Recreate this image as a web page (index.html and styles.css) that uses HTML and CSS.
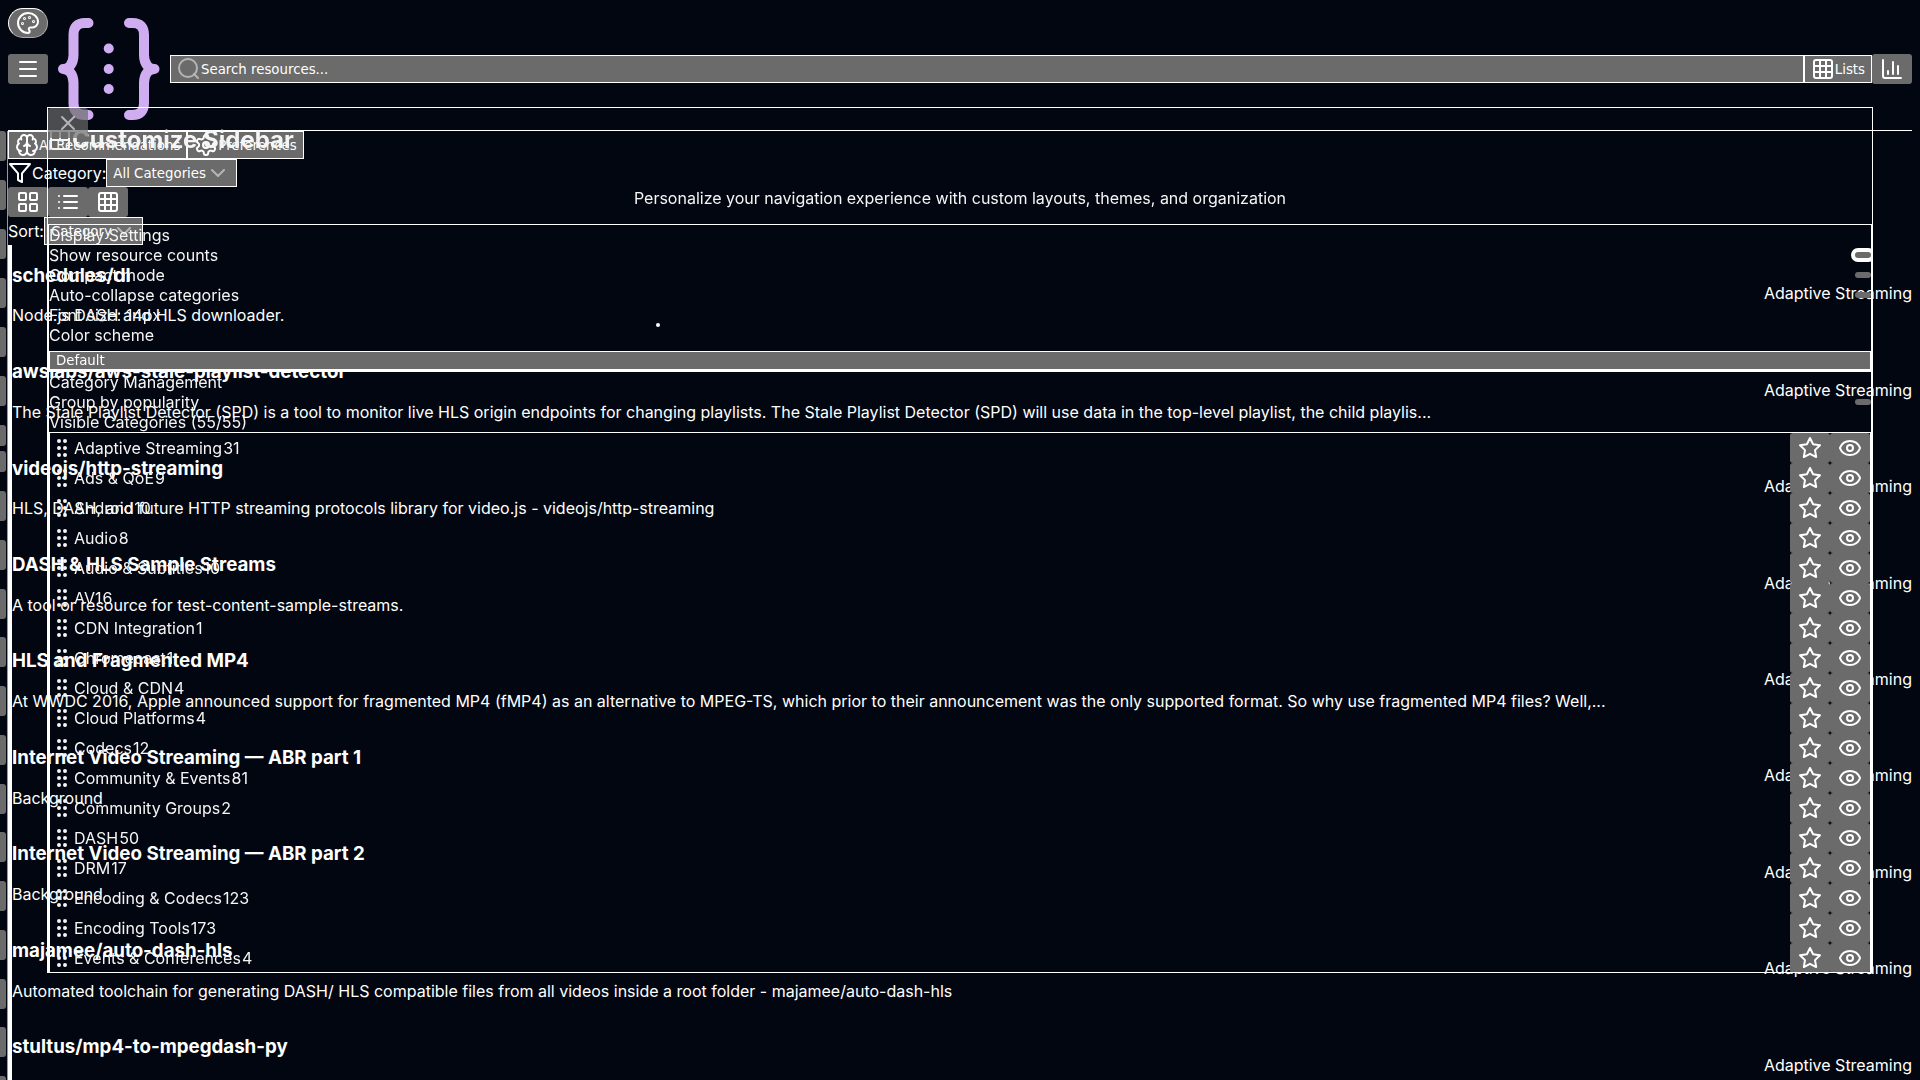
FILE: index.html
```html
<!DOCTYPE html>
<html lang="en">
<head>
<meta charset="utf-8">
<title>Awesome Video Resources</title>
<link rel="stylesheet" href="styles.css">
</head>
<body>
<svg class="sprite" aria-hidden="true">
<symbol id="palette" viewBox="0 0 24 24"><path d="M12 2C6.500 2 2 6.500 2 12s4.500 10 10 10c.926 0 1.648-.746 1.648-1.688 0-.437-.180-.835-.437-1.125-.290-.289-.438-.652-.438-1.125a1.640 1.640 0 0 1 1.668-1.668h1.996c3.051 0 5.555-2.503 5.555-5.554C21.965 6.012 17.461 2 12 2z"/><circle cx="13.500" cy="6.500" r=".5"/><circle cx="17.500" cy="10.500" r=".5"/><circle cx="8.500" cy="7.500" r=".5"/><circle cx="6.500" cy="12.500" r=".5"/></symbol>
<symbol id="menu" viewBox="0 0 24 24"><path d="M4 5h16M4 12h16M4 19h16"/></symbol>
<symbol id="search" viewBox="0 0 24 24"><circle cx="11" cy="11" r="9"/><path d="m21 21-4-4"/></symbol>
<symbol id="grid3" viewBox="0 0 24 24"><rect x="3" y="3" width="18" height="18" rx="2"/><path d="M3 9h18M3 15h18M9 3v18M15 3v18"/></symbol>
<symbol id="grid2" viewBox="0 0 24 24"><rect x="3" y="3" width="7" height="7" rx="1"/><rect x="14" y="3" width="7" height="7" rx="1"/><rect x="14" y="14" width="7" height="7" rx="1"/><rect x="3" y="14" width="7" height="7" rx="1"/></symbol>
<symbol id="list" viewBox="0 0 24 24"><path d="M8 6h13M8 12h13M8 18h13M3 6h.01M3 12h.01M3 18h.01"/></symbol>
<symbol id="chart" viewBox="0 0 24 24"><path d="M3 3v16a2 2 0 0 0 2 2h16M18 17V9M13 17V5M8 17v-3"/></symbol>
<symbol id="chevron" viewBox="0 0 24 24"><path d="m6 9 6 6 6-6"/></symbol>
<symbol id="close" viewBox="0 0 24 24"><path d="M18 6 6 18M6 6l12 12"/></symbol>
<symbol id="filter" viewBox="0 0 24 24"><path d="M22 3H2l8 9.460V19l4 2v-8.540L22 3z"/></symbol>
<symbol id="brain" viewBox="0 0 24 24"><path d="M12 5a3 3 0 1 0-5.997.125 4 4 0 0 0-2.526 5.770 4 4 0 0 0 .556 6.588A4 4 0 1 0 12 18ZM12 5a3 3 0 1 1 5.997.125 4 4 0 0 1 2.526 5.770 4 4 0 0 1-.556 6.588A4 4 0 1 1 12 18ZM15 13a4.500 4.500 0 0 1-3-4 4.500 4.500 0 0 1-3 4M17.599 6.500a3 3 0 0 0 .399-1.375M6.003 5.125A3 3 0 0 0 6.401 6.500M3.477 10.896a4 4 0 0 1 .585-.396M19.938 10.500a4 4 0 0 1 .585.396M6 18a4 4 0 0 1-1.967-.516M19.967 17.484A4 4 0 0 1 18 18"/></symbol>
<symbol id="gear" viewBox="0 0 24 24"><path d="M12.220 2h-.440a2 2 0 0 0-2 2v.180a2 2 0 0 1-1 1.730l-.430.250a2 2 0 0 1-2 0l-.150-.080a2 2 0 0 0-2.730.730l-.220.380a2 2 0 0 0 .730 2.730l.150.100a2 2 0 0 1 1 1.720v.510a2 2 0 0 1-1 1.740l-.150.090a2 2 0 0 0-.730 2.730l.220.380a2 2 0 0 0 2.730.730l.150-.080a2 2 0 0 1 2 0l.430.250a2 2 0 0 1 1 1.730V20a2 2 0 0 0 2 2h.440a2 2 0 0 0 2-2v-.180a2 2 0 0 1 1-1.730l.430-.250a2 2 0 0 1 2 0l.150.080a2 2 0 0 0 2.730-.730l.220-.390a2 2 0 0 0-.730-2.730l-.150-.080a2 2 0 0 1-1-1.740v-.500a2 2 0 0 1 1-1.740l.150-.090a2 2 0 0 0 .730-2.730l-.220-.380a2 2 0 0 0-2.730-.730l-.150.080a2 2 0 0 1-2 0l-.430-.250a2 2 0 0 1-1-1.730V4a2 2 0 0 0-2-2z"/><circle cx="12" cy="12" r="3"/></symbol>
<symbol id="panel" viewBox="0 0 24 24"><rect x="3" y="3" width="18" height="18" rx="2"/><path d="M3 12h18M12 3v9"/></symbol>
<symbol id="grip" viewBox="0 0 24 24"><circle cx="9" cy="12" r="1"/><circle cx="9" cy="5" r="1"/><circle cx="9" cy="19" r="1"/><circle cx="15" cy="12" r="1"/><circle cx="15" cy="5" r="1"/><circle cx="15" cy="19" r="1"/></symbol>
<symbol id="star" viewBox="0 0 24 24"><path d="m12 2 3.090 6.260L22 9.270l-5 4.870 1.180 6.880L12 17.770l-6.180 3.250L7 14.140 2 9.270l6.910-1.010L12 2z"/></symbol>
<symbol id="eye" viewBox="0 0 24 24"><path d="M2.062 12.348a1 1 0 0 1 0-.696 10.750 10.750 0 0 1 19.876 0 1 1 0 0 1 0 .696 10.750 10.750 0 0 1-19.876 0"/><circle cx="12" cy="12" r="3"/></symbol>
</svg>

<button class="icon-btn theme-btn" aria-label="Theme"><svg class="icon"><use href="#palette"/></svg></button>
<header class="topbar">
<button class="icon-btn" aria-label="Menu"><svg class="icon"><use href="#menu"/></svg></button>
<svg class="logo" viewBox="0 0 122 122" role="img" aria-label="Logo"><g class="braces"><path d="M40.500 15H37Q25.500 15 25.500 27V47Q25.500 54 22 58Q19 61 15 61Q19 61 22 64Q25.500 68 25.500 75V95Q25.500 107 37 107H40.500"/><path d="M81 15H84.500Q96 15 96 27V47Q96 54 99.500 58Q102.500 61 106.500 61Q102.500 61 99.500 64Q96 68 96 75V95Q96 107 84.500 107H81"/></g><g class="dots"><circle cx="60.700" cy="40.500" r="5"/><circle cx="60.700" cy="61" r="5"/><circle cx="60.700" cy="81" r="5"/></g></svg>
<button class="box-btn search"><svg class="icon faded"><use href="#search"/></svg>Search resources...</button>
<button class="box-btn"><svg class="icon"><use href="#grid3"/></svg>Lists</button>
<button class="icon-btn" aria-label="Statistics"><svg class="icon"><use href="#chart"/></svg></button>
</header>

<div class="page">
<aside class="rail" id="rail" aria-label="Categories"></aside>
<main class="content">
<div class="row"><button class="box-btn"><svg class="icon"><use href="#brain"/></svg>AI Recommendations</button><button class="box-btn"><svg class="icon"><use href="#gear"/></svg>Preferences</button></div>
<div class="row"><svg class="icon"><use href="#filter"/></svg><span>Category:</span><button class="box-btn">All Categories<svg class="icon faded"><use href="#chevron"/></svg></button></div>
<div class="row"><button class="icon-btn" aria-label="Grid view"><svg class="icon"><use href="#grid2"/></svg></button><button class="icon-btn" aria-label="List view"><svg class="icon"><use href="#list"/></svg></button><button class="icon-btn" aria-label="Compact view"><svg class="icon"><use href="#grid3"/></svg></button></div>
<div class="row"><span>Sort:</span><button class="box-btn">Category<svg class="icon faded"><use href="#chevron"/></svg></button></div>
<div class="resources" id="resources"></div>
</main>
</div>

<section class="dialog" role="dialog" aria-labelledby="dialog-title">
<button class="icon-btn close-btn" aria-label="Close"><svg class="icon"><use href="#close"/></svg></button>
<h2 class="dialog-title" id="dialog-title"><svg class="icon"><use href="#panel"/></svg>Customize Sidebar</h2>
<p class="lead">Personalize your navigation experience with custom layouts, themes, and organization</p>
<div class="card">
<div class="line">Display Settings</div>
<div class="line"><span>Show resource counts</span><button class="switch on" role="switch" aria-checked="true" aria-label="Show resource counts"></button></div>
<div class="line"><span>Compact mode</span><button class="switch" role="switch" aria-checked="false" aria-label="Compact mode"></button></div>
<div class="line"><span>Auto-collapse categories</span><button class="switch" role="switch" aria-checked="false" aria-label="Auto-collapse categories"></button></div>
<div class="line"><span>Font size: 14px</span><i class="thumb"></i></div>
<div class="line">Color scheme</div>
<button class="scheme">Default</button>
</div>
<div class="card">
<div class="line">Category Management</div>
<div class="line"><span>Group by popularity</span><button class="switch" role="switch" aria-checked="false" aria-label="Group by popularity"></button></div>
<div class="line">Visible Categories (55/55)</div>
<ul class="cats" id="cats"></ul>
</div>
</section>
<script src="app.js"></script>
</body>
</html>
```
FILE: app.js
```js
const resources = [
  ["schedules/dl", "Node.js DASH and HLS downloader."],
  ["awslabs/aws-stale-playlist-detector", "The Stale Playlist Detector (SPD) is a tool to monitor live HLS origin endpoints for changing playlists. The Stale Playlist Detector (SPD) will use data in the top-level playlist, the child playlis..."],
  ["videojs/http-streaming", "HLS, DASH, and future HTTP streaming protocols library for video.js - videojs/http-streaming"],
  ["DASH & HLS Sample Streams", "A tool or resource for test-content-sample-streams."],
  ["HLS and Fragmented MP4", "At WWDC 2016, Apple announced support for fragmented MP4 (fMP4) as an alternative to MPEG-TS, which prior to their announcement was the only supported format. So why use fragmented MP4 files? Well,..."],
  ["Internet Video Streaming — ABR part 1", "Background"],
  ["Internet Video Streaming — ABR part 2", "Background"],
  ["majamee/auto-dash-hls", "Automated toolchain for generating DASH/ HLS compatible files from all videos inside a root folder - majamee/auto-dash-hls"],
  ["stultus/mp4-to-mpegdash-py", ""]
];
const categories = [
  ["Adaptive Streaming", 31], ["Ads & QoE", 9], ["Android", 10], ["Audio", 8],
  ["Audio & Subtitles", 10], ["AV1", 6], ["CDN Integration", 1], ["Chromecast", 1],
  ["Cloud & CDN", 4], ["Cloud Platforms", 4], ["Codecs", 12], ["Community & Events", 81],
  ["Community Groups", 2], ["DASH", 50], ["DRM", 17], ["Encoding & Codecs", 123],
  ["Encoding Tools", 173], ["Events & Conferences", 4]
];
const esc = s => s.replace(/&/g, "&amp;");
const icon = id => `<svg class="icon"><use href="#${id}"/></svg>`;
document.getElementById("resources").innerHTML = resources.map(([t, d]) =>
  `<article class="resource"><div class="info"><h3>${esc(t)}</h3><p>${esc(d)}</p></div><span>Adaptive Streaming</span></article>`).join("");
document.getElementById("cats").innerHTML = categories.map(([t, n]) =>
  `<li>${icon("grip")}<span>${esc(t)}</span><span class="count">${n}</span><button class="icon-btn" aria-label="Favorite">${icon("star")}</button><button class="icon-btn" aria-label="Toggle visibility">${icon("eye")}</button></li>`).join("");
const railGroup = (n, name) =>
  `<div class="rail-group ${name}">${`<button class="rail-btn" aria-label="Category"></button>`.repeat(n)}</div>`;
document.getElementById("rail").innerHTML =
  railGroup(6, "") + railGroup(2, "short") + railGroup(13, "long");
```
FILE: styles.css
```css
* { box-sizing: border-box; }
html { height: 100%; overflow: hidden; background: #020610; }
body { height: 100%; margin: 0; padding: 8px; overflow: hidden; color: #fff; font: 16px/20px Inter, sans-serif; }
h2, ul { margin: 0; padding: 0; }
button { font-family: "DejaVu Sans", sans-serif; color: #fff; background: #6b6b6b; border: 0; margin: 0; }
.sprite { display: none; }
.icon { display: block; width: 24px; height: 24px; flex: none; fill: none; stroke: currentColor; stroke-width: 2; stroke-linecap: round; stroke-linejoin: round; }
.faded { opacity: .5; }
.icon-btn { display: flex; align-items: center; justify-content: center; flex: none; width: 40px; height: 30px; padding: 0; border-radius: 3px; }
.box-btn { display: flex; align-items: center; height: 28px; padding: 0 6px; border: 1px solid #fff; white-space: nowrap; }
.theme-btn { border-radius: 15px; border: 1px solid; border-color: #fff #aaa #aaa #fff; }
.topbar { display: flex; align-items: center; height: 92px; margin-top: -15px; }
.logo { flex: none; width: 122px; height: 122px; }
.braces { fill: none; stroke: #d0adf0; stroke-width: 10; stroke-linecap: round; stroke-linejoin: round; }
.dots { fill: #d0adf0; }
.search { flex: 1; }
.page { display: flex; border-top: 1px solid #fff; margin-top: 15px; }
.rail { width: 8px; flex: none; margin-left: -8px; border-right: 1px solid #999; display: flex; flex-direction: column; gap: 19px; height: 975px; }
.rail-group { display: flex; flex-direction: column; flex: none; gap: 19px; }
.rail-btn { width: 6px; height: 30px; flex: none; padding: 0; border-radius: 0 3px 3px 0; }
.short { gap: 5px; }
.short .rail-btn { height: 21px; }
.long { gap: 0; justify-content: space-between; height: 615px; }
.content { flex: 1; min-width: 0; }
.row { display: flex; align-items: center; }
.resources { border-left: 4px solid #fff; }
.resource { display: flex; align-items: center; }
.info { flex: 1; min-width: 0; white-space: nowrap; }
.info h3 { line-height: normal; }
.info p { min-height: 20px; }
.dialog { position: fixed; left: 47px; right: 47px; top: 107px; bottom: 107px; border: 1px solid #fff; overflow: hidden; color: #f5f5f5; }
.close-btn { position: absolute; left: 0; top: 0; opacity: .7; }
.dialog-title { display: flex; align-items: center; height: 24px; margin-top: 20px; font-size: 24px; }
.lead { text-align: center; margin: 36px 0 16px; }
.card { border: 1px solid #fff; }
.line { display: flex; align-items: center; justify-content: space-between; height: 20px; position: relative; }
.switch { width: 16px; height: 6px; border-radius: 3px; padding: 0; }
.on { box-shadow: 0 0 0 4px #fff; }
.thumb { position: absolute; left: 33.3%; top: 18px; width: 4px; height: 4px; border-radius: 2px; background: #fff; }
.scheme { display: block; width: 100%; height: 19px; margin-top: 6px; padding: 0 6px; border: 1px solid #fff; text-align: left; line-height: 16px; }
.cats { list-style: none; border: 1px solid #fff; }
.cats li { display: flex; align-items: center; height: 30px; }
.count { flex: 1; padding-left: 1px; }
```
